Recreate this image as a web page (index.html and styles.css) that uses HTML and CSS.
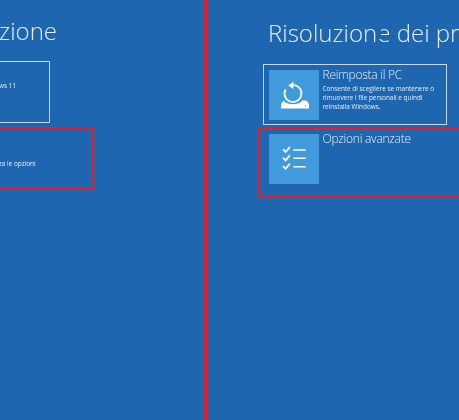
FILE: index.html
```html
<!DOCTYPE html>
<html lang="en">
<head>
    <meta charset="UTF-8">
    <meta name="viewport" content="width=device-width, initial-scale=1.0">
    <title>Risoluzione dei problemi</title>
    <link rel="stylesheet" href="styles.css">
</head>
<body>

<div class="screens">
    <section class="pane pane-left">
        <div class="pane-inner">
            <h1 class="pane-title">Scegli un'opzione</h1>

            <div class="option option-outlined">
                <div class="tile"></div>
                <div class="option-text">
                    <h2>Continua</h2>
                    <p>Esci e continua con Windows 11</p>
                </div>
            </div>

            <div class="highlight">
                <div class="option">
                    <div class="tile"></div>
                    <div class="option-text">
                        <h2>Risoluzione</h2>
                        <p>Reimposta il PC o visualizza le opzioni avanzate</p>
                    </div>
                </div>
            </div>
        </div>
    </section>

    <section class="pane pane-right">
        <h1 class="pane-title">Risoluzione dei problemi</h1>
        <span class="title-glitch"></span>

        <div class="option option-outlined">
            <div class="tile">
                <svg viewBox="0 0 50 50" width="50" height="50">
                    <path d="M24 15 A8.5 8.5 0 1 1 16.6 19.3" fill="none" stroke="#fff" stroke-width="1.7"/>
                    <path d="M24.4 11.8 L19.2 15.4 L24.4 19 Z" fill="#fff"/>
                    <path d="M14.6 30.6 C17 35.4 31 35.4 33.4 30.6 H37.6 L40 34 V38.4 H12 V34 Z" fill="#fff"/>
                    <circle cx="36.5" cy="36" r="0.7" fill="#419adb"/>
                </svg>
            </div>
            <div class="option-text">
                <h2>Reimposta il PC</h2>
                <p>Consente di scegliere se mantenere o rimuovere i file personali e quindi reinstalla Windows.</p>
            </div>
        </div>

        <div class="highlight">
            <div class="option">
                <div class="tile">
                    <svg viewBox="0 0 50 50" width="50" height="50">
                        <path d="M14 15.4 L16.6 18 L21 12.8 M14 23.7 L16.6 26.3 L21 21.1 M14 32.1 L16.6 34.7 L21 29.5" fill="none" stroke="#fff" stroke-width="1.8"/>
                        <path d="M24.3 16 H36.7 M24.3 24.3 H36.7 M24.3 32.7 H36.7" fill="none" stroke="#fff" stroke-width="1.5"/>
                    </svg>
                </div>
                <div class="option-text">
                    <h2>Opzioni avanzate</h2>
                </div>
            </div>
        </div>
    </section>
</div>

</body>
</html>
```

FILE: styles.css
```css
* {
    box-sizing: border-box;
    margin: 0;
    padding: 0;
}

body {
    font-family: 'Open Sans', 'Liberation Sans', sans-serif;
    background: #1e66b0;
    color: #e6eff8;
    overflow: hidden;
}

.screens {
    display: flex;
    height: 420px;
    filter: blur(0.45px);
}

.pane {
    overflow: hidden;
}

.pane-title {
    font-size: 24px;
    font-weight: 300;
    line-height: 32px;
    white-space: nowrap;
}

/* left screen is cropped, most of it sits outside the window */
.pane-left {
    flex: 0 0 204px;
}

.pane-inner {
    width: 234px;
    margin-left: -141px;
    padding-top: 15px;
}

.pane-left .pane-title {
    margin-left: 6px;
    margin-bottom: 14px;
    text-align: right;
    width: 192px;
}

.pane-left .option-outlined {
    margin-left: 7px;
    height: 62px;
    gap: 0;
}

.pane-left .highlight {
    width: 234px;
    margin-top: 4px;
    height: 62px;
    padding: 3px 6px;
}

.pane-left .highlight .option {
    gap: 7px;
}

.pane-left p {
    font-size: 6.5px;
    margin-top: 2px;
}

.pane-left .highlight p {
    margin-top: 15px;
}

.pane-right {
    flex: 1;
    border-left: 3px solid #f01a20;
    padding: 17px 0 0 51px;
    position: relative;
    min-width: 0;
}

.pane-right .pane-title {
    margin-left: 10px;
    margin-bottom: 15px;
}

.title-glitch {
    position: absolute;
    left: 170px;
    top: 26px;
    width: 4px;
    height: 13px;
    background: #1e66b0;
}

.option {
    display: flex;
    gap: 4px;
    width: 184px;
    padding: 4.5px;
}

.option-outlined {
    margin-left: 5px;
    height: 61px;
    border: 1.5px solid #c9d9eb;
}

.tile {
    flex: 0 0 50px;
    width: 50px;
    height: 50px;
    background: #419adb;
}

.tile svg {
    display: block;
}

.option-text {
    flex: 1;
    min-width: 0;
}

.option-text h2 {
    font-size: 12px;
    font-weight: 300;
    letter-spacing: -0.25px;
    line-height: 14px;
    white-space: nowrap;
    margin-top: -2px;
}

.option-text p {
    font-size: 6.4px;
    line-height: 9.3px;
    margin-top: 2px;
}

.highlight {
    width: 240px;
    height: 69px;
    margin-top: 3px;
    padding: 3.5px 8.5px;
    border: 2.5px solid #f01a20;
}

.highlight .option {
    padding: 0;
}
```
